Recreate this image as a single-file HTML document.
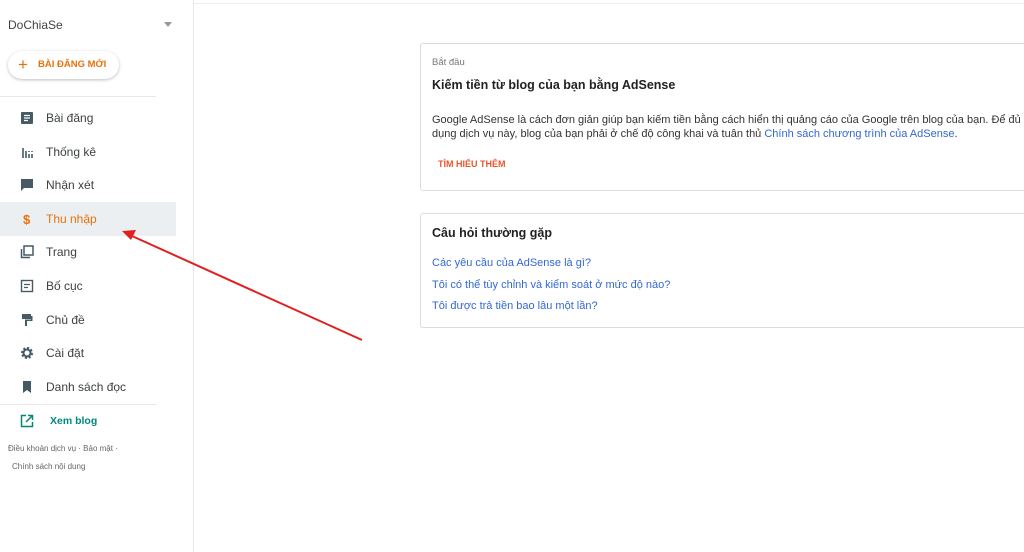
<!DOCTYPE html>
<html><head><meta charset="utf-8"><style>
*{box-sizing:border-box;margin:0;padding:0}
body{width:1024px;height:552px;overflow:hidden;background:#fff;font-family:"Liberation Sans",Arial,sans-serif;position:relative;color:#212121}
.side{position:absolute;left:0;top:0;width:194px;height:552px;border-right:1px solid #e6e6e6}
.topline{position:absolute;left:194px;top:3px;right:0;height:1px;background:#eee}
.blog{position:absolute;left:8px;top:18px;font-size:12px;color:#444}
.caret{position:absolute;left:164px;top:22px;border-left:4px solid transparent;border-right:4px solid transparent;border-top:5px solid #999}
.new{position:absolute;left:8px;top:51px;width:111px;height:28px;border-radius:14px;box-shadow:0 1px 3px rgba(0,0,0,.25);background:#fff;font-size:9.5px;font-weight:bold;color:#e8710a;line-height:28px;padding-left:30px}
.new span{position:absolute;left:10px;top:0;font-size:17px;font-weight:normal}
.div{position:absolute;left:0;width:156px;height:1px;background:#e8e8e8}
.item{position:absolute;left:0;width:176px;height:34px;font-size:12px;color:#3c4043;line-height:34px}
.item .t{position:absolute;left:46px}
.item svg{position:absolute;left:20px;top:10px}
.act{background:#eceff1;color:#e8710a}
.foot{position:absolute;font-size:8px;color:#666}
.card{position:absolute;left:420px;width:620px;border:1px solid #dadce0;border-radius:3px;background:#fff}
.blue{color:#3367d6}
</style></head><body>
<div class="topline"></div>
<div class="side">
<div class="blog">DoChiaSe</div><div class="caret"></div>
<div class="new"><span>+</span>BÀI ĐĂNG MỚI</div>
<div class="div" style="top:96px"></div>
<div class="item" style="top:101px"><svg width="14" height="14"><rect x="1" y="1" width="12" height="12" rx="1" fill="#455a64"/><path d="M4 4.5h6M4 7h6M4 9.5h4" stroke="#fff" stroke-width="1.2"/></svg><span class="t">Bài đăng</span></div>
<div class="item" style="top:135px"><svg width="14" height="14"><path d="M3 3v10M6 6v7M9 9v4M12 9v4M9 6v1M12 6v1" stroke="#455a64" stroke-width="1.6"/></svg><span class="t">Thống kê</span></div>
<div class="item" style="top:168px"><svg width="14" height="14"><path d="M1 1h12v9H4l-3 3z" fill="#455a64"/></svg><span class="t">Nhận xét</span></div>
<div class="item act" style="top:202px"><svg width="14" height="14"><text x="3" y="12" font-size="13" font-weight="bold" fill="#e8710a" font-family="Liberation Sans">$</text></svg><span class="t">Thu nhập</span></div>
<div class="item" style="top:235px"><svg width="14" height="14"><rect x="4" y="1" width="9" height="9" fill="none" stroke="#455a64" stroke-width="1.5"/><path d="M1.5 4v8.5H10" fill="none" stroke="#455a64" stroke-width="1.5"/></svg><span class="t">Trang</span></div>
<div class="item" style="top:269px"><svg width="14" height="14"><rect x="1.5" y="1.5" width="11" height="11" fill="none" stroke="#455a64" stroke-width="1.4"/><path d="M4 5.5h6M4 8.5h4" stroke="#455a64" stroke-width="1.2"/></svg><span class="t">Bố cục</span></div>
<div class="item" style="top:303px"><svg width="14" height="14"><path d="M2 1h9v5H2zM11 3h1.5v5H7v5H5V6.5h6" fill="#455a64"/></svg><span class="t">Chủ đề</span></div>
<div class="item" style="top:336px"><svg width="14" height="14"><circle cx="7" cy="7" r="4.5" fill="none" stroke="#455a64" stroke-width="3" stroke-dasharray="2 1.5"/><circle cx="7" cy="7" r="3.5" fill="none" stroke="#455a64" stroke-width="2"/></svg><span class="t">Cài đặt</span></div>
<div class="item" style="top:370px"><svg width="14" height="14"><path d="M3 1h8v12l-4-3-4 3z" fill="#455a64"/></svg><span class="t">Danh sách đọc</span></div>
<div class="div" style="top:404px"></div>
<div class="item" style="top:404px;color:#00897b;font-weight:bold;font-size:10.5px"><svg width="14" height="14"><path d="M6 1.5H1.5v11h11V8M8 1.5h4.5V6M12.5 1.5L6 8" fill="none" stroke="#00897b" stroke-width="1.5"/></svg><span class="t" style="left:50px">Xem blog</span></div>
<div class="foot" style="left:8px;top:444px">Điều khoản dịch vụ · Bảo mật ·</div>
<div class="foot" style="left:12px;top:462px">Chính sách nội dung</div>
</div>
<div class="card" style="top:43px;height:148px">
<div style="position:absolute;left:11px;top:13px;font-size:9.5px;color:#777">Bắt đầu</div>
<div style="position:absolute;left:11px;top:34px;font-size:12.5px;font-weight:bold;color:#222">Kiếm tiền từ blog của bạn bằng AdSense</div>
<div style="position:absolute;left:11px;top:70px;font-size:11px;line-height:13.5px;color:#333;width:620px">Google AdSense là cách đơn giản giúp bạn kiếm tiền bằng cách hiển thị quảng cáo của Google trên blog của bạn. Để đủ<br>dụng dịch vụ này, blog của bạn phải ở chế độ công khai và tuân thủ <span class="blue">Chính sách chương trình của AdSense</span>.</div>
<div style="position:absolute;left:17px;top:115px;font-size:9px;font-weight:bold;color:#e4572e">TÌM HIỂU THÊM</div>
</div>
<div class="card" style="top:213px;height:115px">
<div style="position:absolute;left:11px;top:12px;font-size:12.5px;font-weight:bold;color:#222">Câu hỏi thường gặp</div>
<div class="blue" style="position:absolute;left:11px;top:39px;font-size:11px;line-height:21.5px">Các yêu cầu của AdSense là gì?<br>Tôi có thể tùy chỉnh và kiểm soát ở mức độ nào?<br>Tôi được trả tiền bao lâu một lần?</div>
</div>
<svg style="position:absolute;left:0;top:0" width="1024" height="552"><line x1="362" y1="340" x2="132" y2="236" stroke="#e02020" stroke-width="2"/><path d="M122 231l14-1-5 10z" fill="#e02020"/></svg>
</body></html>
